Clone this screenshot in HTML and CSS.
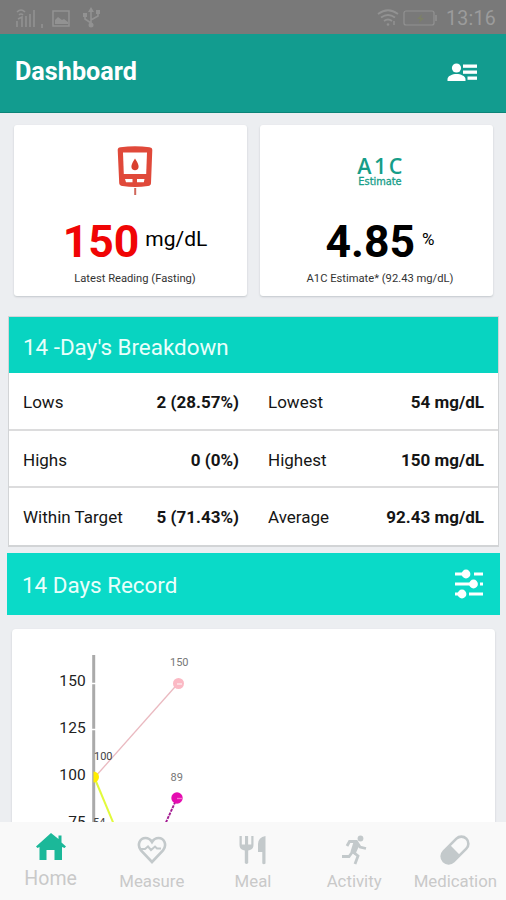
FILE: index.html
```html
<!DOCTYPE html>
<html lang="en">
<head>
<meta charset="utf-8">
<title>Dashboard</title>
<link rel="stylesheet" href="styles.css">
</head>
<body>
<div class="app">
  <div class="status">
    <svg class="status-left" width="90" height="24" viewBox="0 0 90 24" fill="none" stroke="currentColor" stroke-width="1.6">
      <path d="M1 5q4-4 8 0M3 8q2-2 4 0M2 12l4-2v10M1 14v6M10 9v11M14 7v13M18 3v17"/>
      <path d="M26 17v4"/>
      <path d="M37 4h16v15H37z"/>
      <path d="M39 17v-4l3-3 4 3 2-1 4 3v2z" fill="currentColor" stroke="none"/>
      <path d="M75 3v16M75 16l-6-4V8M75 13l7-4V5"/>
      <path d="M75 0l-3 5h6zM67 6h4v4h-4zM80 3h4v4h-4z" fill="currentColor" stroke="none"/>
      <circle cx="75" cy="18" r="2.500" fill="currentColor" stroke="none"/>
    </svg>
    <div class="status-right">
      <svg width="61" height="20" viewBox="0 0 61 20" fill="none" stroke="currentColor" stroke-width="1.8">
        <path d="M1 6q10-7.500 20 0M4 9.500q7-5 14 0M7 13q4-3 8 0"/>
        <circle cx="11" cy="16.500" r="1.300" fill="currentColor" stroke="none"/>
        <path d="M17 13v4" stroke-width="1.500"/>
        <rect x="27" y="3" width="30" height="14" rx="2" stroke-width="1.200"/>
        <path d="M59 7v6" stroke-width="1.500"/>
        <path d="M45 6l-5 5h3l-1 4 5-5h-3z" fill="#7c8067" stroke="none"/>
      </svg>
      <span class="clock">13:16</span>
    </div>
  </div>

  <header class="topbar">
    <h1>Dashboard</h1>
    <svg width="30" height="19" viewBox="0 0 30 19" fill="#fff">
      <circle cx="9.500" cy="5" r="4.600"/>
      <path d="M0.500 18v-2c0-3 5-5 9-5s9 2 9 5v2z"/>
      <rect x="16" y="1.500" width="14" height="3.300"/>
      <rect x="16" y="7.500" width="14" height="3.300"/>
      <rect x="20.500" y="13.500" width="9.500" height="3.300"/>
    </svg>
  </header>

  <main class="content">
    <div class="cards">
      <section class="card">
        <div class="card-icon">
          <svg width="36" height="50" viewBox="0 0 36 50">
            <path d="M3.500 1.200Q18-.8 32.500 1.200Q35.500 1.600 35.300 4L34 37Q34 39.600 31 40Q18 41.800 5.500 40Q2.300 39.500 2.200 37L.7 4Q.6 1.600 3.500 1.200z" fill="#e0493a"/>
            <path d="M6 6.500h24l-.8 21.500H6.800z" fill="#fff"/>
            <path d="M18 12.500q4.300 6.500 3.500 9a3.600 3.600 0 0 1-7 0q-.8-2.500 3.500-9z" fill="#d9402f"/>
            <path d="M8 33h7.500v3.300H9zM20 33h7.500l-.7 3.300H20z" fill="#fff"/>
            <path d="M18.200 42v7" stroke="#d0685c" stroke-width="2"/>
          </svg>
        </div>
        <div class="reading red"><b>150</b><span>mg/dL</span></div>
        <p class="caption fasting">Latest Reading (Fasting)</p>
      </section>
      <section class="card">
        <div class="card-icon a1c"><strong>A1C</strong><em>Estimate</em></div>
        <div class="reading percent"><b>4.85</b><span>%</span></div>
        <p class="caption">A1C Estimate* (92.43 mg/dL)</p>
      </section>
    </div>

    <section class="breakdown">
      <h2>14 -Day's Breakdown</h2>
      <div class="row"><span>Lows</span><b>2 (28.57%)</b><span>Lowest</span><b>54 mg/dL</b></div>
      <div class="row"><span>Highs</span><b>0 (0%)</b><span>Highest</span><b>150 mg/dL</b></div>
      <div class="row"><span>Within Target</span><b>5 (71.43%)</b><span>Average</span><b>92.43 mg/dL</b></div>
    </section>

    <section class="record">
      <h2>14 Days Record</h2>
      <svg width="30" height="30" viewBox="0 0 30 30" fill="#fff" stroke="#fff" stroke-width="2.800">
        <path d="M1 5h14M20 5h9M1 15h17M26 15h3M1 25h6M15 25h14"/>
        <circle cx="12" cy="5" r="3"/><circle cx="19.500" cy="15" r="3"/><circle cx="8" cy="25" r="3"/>
      </svg>
    </section>

    <section class="chart">
      <svg width="483" height="193" viewBox="12 629 483 193">
        <path d="M93.700 655v167" stroke="#aaa" stroke-width="3"/>
        <path d="M92 683.500h4M92 729.500h4" stroke="#fff" stroke-width="1.500"/>
        <g class="axis" text-anchor="end">
          <text x="86" y="686">150</text>
          <text x="86" y="733">125</text>
          <text x="86" y="780">100</text>
          <text x="86" y="827">75</text>
        </g>
        <path d="M95 777L178 683.500" stroke="#eab9c0" stroke-width="1.300"/>
        <path d="M95 779L115 827" stroke="#e2fa3c" stroke-width="2"/>
        <path d="M177 798L163 829" stroke="#a31b91" stroke-width="1.900" stroke-dasharray="3 1"/>
        <circle cx="178.500" cy="683.500" r="5.500" fill="#fbb9c4"/>
        <path d="M177 684h5" stroke="#fde6ea" stroke-width="1.500"/>
        <circle cx="177" cy="798" r="5.700" fill="#e50cb0"/>
        <path d="M177 798.500h5" stroke="#f573cf" stroke-width="1.300"/>
        <path d="M93.500 771.500a5.500 5.500 0 0 1 0 11z" fill="#ffec00"/>
        <g class="point">
          <text x="170" y="666">150</text>
          <text x="170.500" y="781">89</text>
          <text x="94" y="760" class="dark">100</text>
          <text x="93" y="826" class="dark">54</text>
        </g>
      </svg>
    </section>
  </main>

  <nav class="tabs">
    <a class="tab active">
      <svg width="30" height="28" viewBox="0 0 30 28" fill="#1bb899"><path d="M15 0L0 13.500l1.500 1.500L3.500 14v13h7V17h8v10h7.500V14l2.500 1 1.500-1.500-4.500-4V2.500h-3V6z"/></svg>
      <span>Home</span>
    </a>
    <a class="tab">
      <svg width="30" height="28" viewBox="0 0 30 28" fill="none" stroke="#c3c9cb" stroke-width="2.600"><path d="M15 26L4 14.500C-.5 8.500 3 2 8.500 2c3 0 5 1.500 6.500 4 1.500-2.500 3.500-4 6.500-4C27 2 30.500 8.500 26 14.500z"/><path d="M3 13h5l3-2.500 3 3.500 4-3.500 2 2h4" stroke-width="2"/></svg>
      <span>Measure</span>
    </a>
    <a class="tab">
      <svg width="30" height="30" viewBox="0 0 30 30" fill="#c3c9cb"><path d="M1.500 1v9q0 4 3.500 5l1.800.5V28q1.700 2 3.400 0V15.500L12 15q3.500-1 3.500-5V1h-2.200v8.500h-3.200V1H7v8.500H3.800V1zM27.500 1v27.500q-1.700 1.500-3.200 0V17H20V9q0-6.500 7.500-8z"/></svg>
      <span>Meal</span>
    </a>
    <a class="tab">
      <svg width="28" height="30" viewBox="0 0 28 30" fill="none" stroke="#c3c9cb" stroke-width="2.800"><circle cx="20.500" cy="3.500" r="2.900" fill="#c3c9cb" stroke="none"/><path d="M7 11l2.500-4.500h7L20 12l6 1.500M17 8l-4.500 8.500L18 21l-3 8M2 21.500h7l3-4" /><path d="M13.500 7L10.500 16.500l4.500 3.500L19.500 10z" fill="#c3c9cb" stroke="none"/></svg>
      <span>Activity</span>
    </a>
    <a class="tab">
      <svg width="30" height="30" viewBox="0 0 30 30"><g transform="rotate(-45 15 15)"><rect x="-1" y="8" width="32" height="14" rx="7" fill="none" stroke="#c3c9cb" stroke-width="2.600"/><path d="M15 8H6a7 7 0 0 0 0 14h9z" fill="#c3c9cb"/></g></svg>
      <span>Medication</span>
    </a>
  </nav>
</div>
</body>
</html>
```

FILE: styles.css
```css
* { box-sizing: border-box; margin: 0; padding: 0; }

body {
  width: 506px;
  height: 900px;
  overflow: hidden;
  font-family: Roboto, "Liberation Sans", sans-serif;
  color: #151515;
  background: #eceef1;
}

.app { display: flex; flex-direction: column; height: 900px; }

.status {
  height: 34px;
  flex: none;
  display: flex;
  justify-content: space-between;
  padding: 7px 10px 0 16px;
  background: #797979;
  color: #929292;
}

.status-right { display: flex; align-items: flex-start; gap: 8px; }
.status-right svg { margin-top: 1px; }
.clock { font-size: 19.5px; line-height: 24px; letter-spacing: .3px; color: #9c9c9c; }

.topbar {
  height: 79px;
  flex: none;
  display: flex;
  align-items: center;
  justify-content: space-between;
  padding: 0 29px 3px 15px;
  background: #129c8f;
  border-bottom: 1px solid #0c8478;
  color: #fff;
}
.topbar h1 { font-size: 25.2px; font-weight: 700; }
.topbar svg { margin-top: 1px; }

.content { flex: 1; min-height: 0; overflow: hidden; padding-top: 12px; }

.cards { display: flex; gap: 13px; padding: 0 13px 0 14px; }

.card {
  width: 233px;
  height: 171px;
  display: flex;
  flex-direction: column;
  align-items: center;
  background: #fff;
  border-radius: 3px;
  box-shadow: 0 1px 2px #c3c7cc;
}

.card-icon { height: 92px; padding: 21px 8px 0 16px; }
.a1c {
  display: flex;
  flex-direction: column;
  align-items: center;
  padding: 31px 0 0 7px;
  color: #169d88;
}
.a1c strong {
  font: 600 21.5px/20px "Open Sans", sans-serif;
  letter-spacing: 2.4px;
  margin-right: -2px;
}
.a1c em {
  font: 400 9.8px/11px "DejaVu Sans", sans-serif;
  -webkit-text-stroke: .3px;
}

.reading { display: flex; height: 53px; line-height: 51px; color: #000; }
.reading b { font-size: 44.5px; }
.reading span { font-size: 21px; line-height: 45px; margin-left: 6px; }
.reading.red { padding-left: 9px; }
.reading.red b { color: #f00505; }
.reading.percent { padding-left: 7px; }
.reading.percent span { font-size: 17px; margin-left: 7px; }

.caption { font-size: 11.2px; line-height: 18px; padding-left: 7px; color: #333; }
.caption.fasting { padding-left: 9px; }

.breakdown {
  margin: 20px 7px 0 8px;
  height: 231px;
  border: 1px solid #d2d4d6;
  border-bottom-width: 2px;
  background: #fff;
}

h2 { font-size: 22.4px; font-weight: 400; color: #e9fffb; }
.breakdown h2 { height: 56px; line-height: 61px; padding-left: 14px; background: #08d4c1; }

.row {
  height: 57.5px;
  display: grid;
  grid-template-columns: 117px 99px 105px 140px;
  padding-left: 14px;
  line-height: 59px;
  font-size: 17px;
  white-space: nowrap;
  border-bottom: 2px solid #dcdcdd;
}
.row:last-child { border-bottom: 0; }
.row b { text-align: right; font-weight: 700; }
.row span:nth-child(3) { padding-left: 29px; }

.record {
  height: 62px;
  margin: 6px 6px 0 7px;
  padding: 0 16px 0 15px;
  display: flex;
  align-items: center;
  justify-content: space-between;
  background: #0adac8;
}
.record h2 { padding-top: 2px; }

.chart {
  height: 200px;
  margin: 14px 11px 0 12px;
  background: #fff;
  border-radius: 4px;
  box-shadow: 0 1px 2px #c3c7cc;
}
.chart svg { display: block; }
.axis { font-size: 15.5px; fill: #222; letter-spacing: .2px; }
.point { font-size: 11px; fill: #777; }
.point .dark { fill: #444; }

.tabs {
  height: 78px;
  flex: none;
  display: grid;
  grid-template-columns: repeat(5, 101.2px);
  background: #f9f9f9;
}
.tab {
  display: flex;
  flex-direction: column;
  align-items: center;
  padding-top: 13px;
  color: #c9c9c9;
  font-size: 16.8px;
}
.tab svg { height: 30px; }
.tab span { line-height: 20px; margin-top: 6px; }
.tab.active { padding-top: 10px; font-size: 19.5px; }
.tab.active span { margin-top: 7px; }
```
